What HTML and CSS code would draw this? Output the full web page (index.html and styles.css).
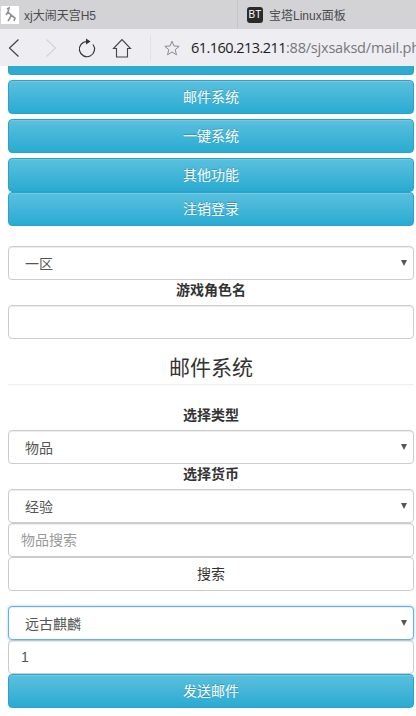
FILE: index.html
```html
<!DOCTYPE html>
<html lang="zh">
  <head>
    <meta charset="UTF-8" />
    <title>xj大闹天宫H5</title>
    <link rel="stylesheet" href="styles.css">
  </head>
  <body>
    <div class="tabs">
      <div class="tab">
        <svg class="favicon" width="18" height="18" viewBox="0 0 18 18">
          <rect width="18" height="18" fill="#fff"/>
          <path d="M6 3 L8 2 L7 6 L10 9 L9 12 M7 6 L5 9 M10 9 L14 12 L13 15 M9 12 L7 15" fill="none" stroke="#8d9094" stroke-width="1.6"/>
        </svg>
        <span>xj大闹天宫H5</span>
      </div>
      <div class="tab tab-second">
        <span class="bt-icon">BT</span>
        <span>宝塔Linux面板</span>
      </div>
    </div>
    <div class="toolbar">
      <svg class="tool-icon tool-back" width="16" height="20" viewBox="0 0 16 20"><path d="M12.5 1.5 L3.5 10 L12.5 18.5" fill="none" stroke="#444" stroke-width="1.2"/></svg>
      <svg class="tool-icon tool-forward" width="16" height="20" viewBox="0 0 16 20"><path d="M3.5 1.5 L12.5 10 L3.5 18.5" fill="none" stroke="#d4d4d8" stroke-width="1.2"/></svg>
      <svg class="tool-icon tool-reload" width="20" height="22" viewBox="0 0 20 22">
        <path d="M10 4.5 A7.6 7.6 0 1 0 16 7.5" fill="none" stroke="#333" stroke-width="1.2"/>
        <path d="M9 1.5 L13.5 4.5 L9 7.5 Z" fill="#333"/>
      </svg>
      <svg class="tool-icon tool-home" width="20" height="20" viewBox="0 0 20 20"><path d="M1.5 10.5 L10 1.5 L18.5 10.5 H15.5 V19 H4.5 V10.5 Z" fill="none" stroke="#444" stroke-width="1.1"/></svg>
      <div class="tool-sep"></div>
      <svg class="tool-star" width="16" height="16" viewBox="0 0 16 16"><path d="M8 1.2 L10 6 L15.2 6.3 L11.2 9.7 L12.5 14.8 L8 12 L3.5 14.8 L4.8 9.7 L0.8 6.3 L6 6 Z" fill="none" stroke="#8a8a90"/></svg>
      <div class="url"><span class="url-host">61.160.213.211</span>:88/sjxsaksd/mail.php</div>
    </div>

    <div class="page">
      <button class="btn btn-info btn-cut"></button>
      <div class="menu">
        <button class="btn btn-info">邮件系统</button>
        <button class="btn btn-info">一键系统</button>
        <button class="btn btn-info">其他功能</button>
      </div>
      <button class="btn btn-info">注销登录</button>

      <div class="select-wrap server">
        <select class="control"><option>一区</option></select>
      </div>
      <label class="label">游戏角色名</label>
      <input class="control input" type="text" />

      <h3 class="title">邮件系统</h3>

      <label class="label label-type">选择类型</label>
      <div class="select-wrap">
        <select class="control"><option>物品</option></select>
      </div>
      <label class="label">选择货币</label>
      <div class="select-wrap">
        <select class="control"><option>经验</option></select>
      </div>
      <input class="control input" type="text" placeholder="物品搜索" />
      <button class="btn btn-default">搜索</button>

      <div class="select-wrap item">
        <select class="control focused"><option>远古麒麟</option></select>
      </div>
      <input class="control input" type="text" value="1" />
      <button class="btn btn-info">发送邮件</button>
    </div>
  </body>
</html>
```

FILE: styles.css
```css
html, body {
  height: 100%;
}

body {
  margin: 0;
  overflow: hidden;
  background: #fff;
  font-family: "Liberation Sans", "Noto Sans CJK SC", sans-serif;
  font-size: 14px;
  color: #333;
}

.tabs {
  display: flex;
  height: 29px;
  background: #d3d3d6;
  color: #4a4a4e;
  font-size: 12px;
}
.tab {
  display: flex;
  align-items: center;
  width: 238px;
  box-sizing: border-box;
  padding-left: 1px;
  border-right: 1px solid #c6c6c9;
}
.tab-second {
  width: 178px;
  padding-left: 9px;
  border-right: none;
}
.favicon {
  margin-right: 5px;
}
.bt-icon {
  width: 16px;
  height: 16px;
  margin-right: 6px;
  border-radius: 3px;
  background: #2a2a2a;
  color: #fff;
  font-size: 10px;
  line-height: 16px;
  text-align: center;
}

.toolbar {
  display: flex;
  align-items: center;
  height: 37px;
  background: #eeeef2;
  overflow: hidden;
  white-space: nowrap;
}
.tool-icon {
  flex: none;
}
.tool-back {
  margin-left: 6px;
}
.tool-forward {
  margin-left: 21px;
}
.tool-reload {
  margin-left: 18px;
}
.tool-home {
  margin-left: 15px;
}
.tool-sep {
  flex: none;
  width: 1px;
  height: 26px;
  margin-left: 18px;
  background: #e2e2e6;
}
.tool-star {
  flex: none;
  margin-left: 13px;
}
.url {
  margin-left: 11px;
  font-family: "Open Sans", sans-serif;
  font-size: 14.5px;
  letter-spacing: -0.2px;
  color: #77777c;
}
.url-host {
  letter-spacing: -0.55px;
  color: #1c1c1e;
}

.page {
  padding: 0 2px 0 8px;
}

.btn {
  display: block;
  width: 100%;
  height: 34px;
  padding: 0 0 2px;
  border: 1px solid #ccc;
  border-radius: 4px;
  font: inherit;
  text-align: center;
}
.btn-info {
  border-color: #28a4c9;
  background: linear-gradient(to bottom, #5bc0de 0, #2aabd2 100%);
  color: #fff;
  text-shadow: 0 -1px 0 rgba(0, 0, 0, 0.2);
  box-shadow: inset 0 1px 0 rgba(255, 255, 255, 0.15);
}
.btn-default {
  background: #fff;
  color: #333;
}
.btn-cut {
  height: 9px;
  border-top: none;
  border-radius: 0 0 4px 4px;
  background: #2fabd2;
  box-shadow: none;
}

.menu {
  display: flex;
  flex-direction: column;
  gap: 5px;
  margin-top: 5px;
}

.control {
  display: block;
  width: 100%;
  height: 34px;
  box-sizing: border-box;
  border: 1px solid #ccc;
  border-radius: 4px;
  background: #fff;
  font: inherit;
  color: #555;
  box-shadow: inset 0 1px 1px rgba(0, 0, 0, 0.075);
}
.input {
  padding: 6px 12px;
}
.input::placeholder {
  color: #999;
}
select.control {
  padding: 2px 16px 0;
  appearance: none;
}
.focused {
  border-color: #66afe9;
  box-shadow: inset 0 1px 1px rgba(0, 0, 0, 0.075), 0 0 3px rgba(102, 175, 233, 0.6);
}

.select-wrap {
  position: relative;
}
.select-wrap::after {
  content: "";
  position: absolute;
  top: 14px;
  right: 7px;
  border-top: 6px solid #555;
  border-left: 3px solid transparent;
  border-right: 3px solid transparent;
}
.server {
  margin-top: 20px;
}
.item {
  margin-top: 15px;
}

.label {
  display: block;
  margin: 3px 0 7px;
  height: 15px;
  line-height: 15px;
  font-weight: bold;
  text-align: center;
}
.label-type {
  margin-top: 23px;
}

.title {
  margin: 15px 0 0;
  padding-bottom: 3px;
  border-bottom: 1px solid #eee;
  font-size: 21px;
  font-weight: normal;
  line-height: 27px;
  text-align: center;
}
```
